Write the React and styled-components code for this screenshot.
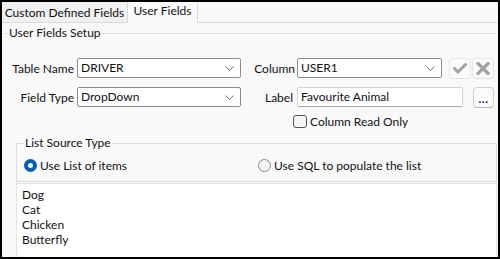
import React from 'react';
import styled, { createGlobalStyle } from 'styled-components';

const Global = createGlobalStyle`
  html, body { margin: 0; padding: 0; background: #fff; }
  body {
    font-family: "Lato", "Segoe UI", sans-serif;
    font-size: 12px;
    color: #111;
  }
  * { box-sizing: border-box; }
`;

const Frame = styled.div`
  width: 500px;
  height: 259px;
  border: 2px solid #000;
  background: #f9f9f9;
  display: flex;
  flex-direction: column;
  overflow: hidden;
`;

const TabStrip = styled.div`
  display: flex;
  height: 21px;
  flex-shrink: 0;
  border-bottom: 1px solid #dadada;
`;

const Tab = styled.div`
  width: ${p => p.$w}px;
  height: ${p => (p.$active ? 21 : 20)}px;
  padding-top: ${p => (p.$active ? 0 : 3)}px;
  line-height: ${p => (p.$active ? 18 : 16)}px;
  text-align: center;
  white-space: nowrap;
  background: ${p => (p.$active ? '#f9f9f9' : '#f0f0f0')};
  border-right: 1px solid #dadada;
`;

const GroupHeader = styled.div`
  display: flex;
  align-items: center;
  height: 14px;
  margin: 3px 2px 0 3px;
  line-height: 14px;
  flex-shrink: 0;
`;

const Rule = styled.div`
  height: 1px;
  background: #dcdcdc;
  flex: ${p => (p.$grow ? 1 : 'none')};
  width: ${p => (p.$grow ? 'auto' : '3px')};
`;

const HeaderText = styled.span`
  padding: 0 1px;
`;

const Form = styled.div`
  display: grid;
  grid-template-columns: 69px 164px 56px 197px;
  grid-auto-rows: 20px;
  row-gap: 9px;
  margin: 18px 0 0 6px;
  flex-shrink: 0;
`;

const FieldLabel = styled.label`
  display: flex;
  align-items: center;
  justify-content: flex-end;
  padding-right: ${p => p.$pr ?? 3}px;
  white-space: nowrap;
`;

const Cell = styled.div`
  display: flex;
  align-items: center;
  gap: ${p => p.$gap || 0}px;
  margin-left: ${p => p.$ml || 0}px;
`;

const Select = styled.div`
  width: ${p => p.$w}px;
  height: 20px;
  background: #fff;
  border: 1px solid #8c8c8c;
  border-radius: 2px;
  display: flex;
  align-items: center;
  justify-content: space-between;
  padding: 0 6px 0 3px;
  line-height: 18px;
`;

const TextBox = styled.div`
  width: ${p => p.$w}px;
  height: 20px;
  background: #fff;
  border: 1px solid #d4d4d4;
  border-bottom-color: #a8a8a8;
  border-radius: 2px;
  padding: 0 3px;
  line-height: 18px;
`;

const IconButton = styled.button`
  width: ${p => p.$w || 22}px;
  height: 21px;
  padding: 0;
  margin: 0;
  background: #fbfbfb;
  border: 1px solid ${p => (p.$dim ? '#e6e6e6' : '#d2d2d2')};
  border-bottom-color: ${p => (p.$dim ? '#e0e0e0' : '#b4b4b4')};
  border-radius: 4px;
  display: flex;
  align-items: center;
  justify-content: center;
  font-family: inherit;
  font-size: 12px;
  color: #1a1a5a;
  line-height: 1;
`;

const Dots = styled.span`
  display: block;
  margin-top: 3px;
  font-weight: bold;
  letter-spacing: 0.5px;
`;

const CheckRow = styled.label`
  display: flex;
  align-items: center;
  gap: 3px;
  height: 13px;
  margin: 8px 0 0 291px;
  flex-shrink: 0;
  white-space: nowrap;
`;

const Box = styled.span`
  width: 14px;
  height: 13px;
  border: 1px solid #555;
  border-radius: 3px;
  background: #f5f5f5;
  flex-shrink: 0;
`;

const SourceSet = styled.fieldset`
  margin: 8px 1px 0 14px;
  padding: 8px 0 8px 7px;
  border: 1px solid #dcdcdc;
  min-width: 0;
  flex-shrink: 0;
`;

const Legend = styled.legend`
  padding: 0 1px;
  line-height: 14px;
`;

const RadioRow = styled.div`
  display: grid;
  grid-template-columns: 234px 1fr;
  height: 15px;
`;

const RadioOption = styled.label`
  display: flex;
  align-items: center;
  gap: 3px;
  white-space: nowrap;
  line-height: 15px;
`;

const RadioDot = styled.span`
  width: 13px;
  height: 13px;
  border-radius: 50%;
  flex-shrink: 0;
  display: flex;
  align-items: center;
  justify-content: center;
  background: ${p => (p.$on ? '#005fb8' : '#f3f3f3')};
  border: ${p => (p.$on ? 'none' : '1px solid #8a8a8a')};
  &::after {
    content: '';
    width: 5px;
    height: 5px;
    border-radius: 50%;
    background: #fff;
    display: ${p => (p.$on ? 'block' : 'none')};
  }
`;

const Memo = styled.div`
  flex: 1;
  margin: 1px 1px 0 14px;
  background: #fff;
  border: 1px solid #e4e4e4;
  border-bottom: none;
  padding: 3px 5px;
  line-height: 15px;
`;

const Chevron = () => (
  <svg width="9" height="5" viewBox="0 0 9 5" fill="none">
    <path d="M0.5 0.5 L4.5 4.5 L8.5 0.5" stroke="#6a6a6a" strokeWidth="1" />
  </svg>
);

const CheckIcon = () => (
  <svg width="14" height="11" viewBox="0 0 14 11" fill="none">
    <path d="M1.5 5.5 L5 9 L12.5 1.5" stroke="#a2a2a2" strokeWidth="3" strokeLinecap="square" />
  </svg>
);

const CrossIcon = () => (
  <svg width="14" height="13" viewBox="0 0 14 13" fill="none">
    <path d="M2 1.5 L12 11.5 M12 1.5 L2 11.5" stroke="#a2a2a2" strokeWidth="3.2" strokeLinecap="square" />
  </svg>
);

const items = ['Dog', 'Cat', 'Chicken', 'Butterfly'];

export default function App() {
  return (
    <>
      <Global />
      <Frame>
        <TabStrip>
          <Tab $w={126}>Custom Defined Fields</Tab>
          <Tab $w={70} $active>User Fields</Tab>
        </TabStrip>
        <GroupHeader>
          <Rule />
          <HeaderText>User Fields Setup</HeaderText>
          <Rule $grow />
        </GroupHeader>
        <Form>
          <FieldLabel>Table Name</FieldLabel>
          <Cell>
            <Select $w={164}>
              <span>DRIVER</span>
              <Chevron />
            </Select>
          </Cell>
          <FieldLabel $pr={2}>Column</FieldLabel>
          <Cell>
            <Select $w={145}>
              <span>USER1</span>
              <Chevron />
            </Select>
            <Cell $gap={1} $ml={7}>
              <IconButton $dim aria-label="Save"><CheckIcon /></IconButton>
              <IconButton $dim aria-label="Cancel"><CrossIcon /></IconButton>
            </Cell>
          </Cell>
          <FieldLabel>Field Type</FieldLabel>
          <Cell>
            <Select $w={164}>
              <span>DropDown</span>
              <Chevron />
            </Select>
          </Cell>
          <FieldLabel $pr={4}>Label</FieldLabel>
          <Cell $gap={10}>
            <TextBox $w={166}>Favourite Animal</TextBox>
            <IconButton $w={21}><Dots>...</Dots></IconButton>
          </Cell>
        </Form>
        <CheckRow>
          <Box />
          <span>Column Read Only</span>
        </CheckRow>
        <SourceSet>
          <Legend>List Source Type</Legend>
          <RadioRow>
            <RadioOption>
              <RadioDot $on />
              <span>Use List of items</span>
            </RadioOption>
            <RadioOption>
              <RadioDot />
              <span>Use SQL to populate the list</span>
            </RadioOption>
          </RadioRow>
        </SourceSet>
        <Memo>
          {items.map(i => (
            <div key={i}>{i}</div>
          ))}
        </Memo>
      </Frame>
    </>
  );
}
